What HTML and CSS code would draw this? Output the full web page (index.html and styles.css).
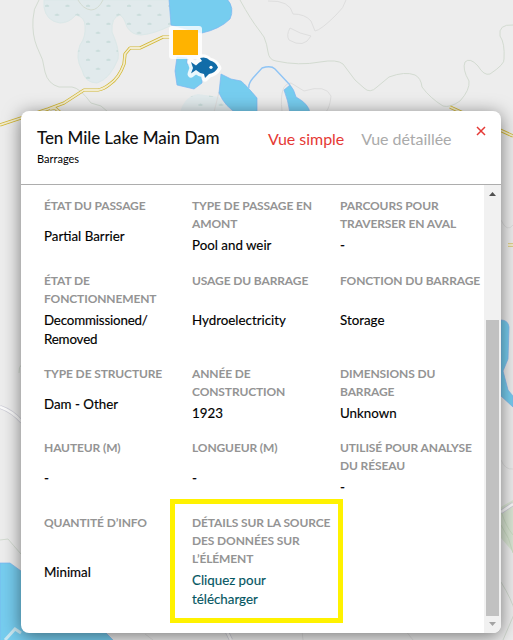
FILE: index.html
```html
<!DOCTYPE html>
<html lang="fr">
<head>
<meta charset="utf-8">
<title>Ten Mile Lake Main Dam</title>
<link rel="stylesheet" href="styles.css">
</head>
<body>
<svg class="map" viewBox="0 0 513 640" aria-hidden="true">
  <defs>
    <pattern id="marsh" width="20.5" height="18" patternUnits="userSpaceOnUse" x="3" y="2">
      <path d="M1 4h4M11 13h4" stroke="#b9d3cf" stroke-width="1.2"/><path d="M3 2.5v1.5M13 11.5v1.5" stroke="#c8dad8"/>
    </pattern>
  </defs>
  <rect width="513" height="640" fill="#ededed"/>
  <g id="wetlands">
    <path fill="#e1eaec" stroke="#dbe8e8" d="M44 0L44 7Q46 21 60 23Q69 23 76 15Q85 17 85 26Q86 37 80 45Q75 58 82 70Q85 83 97 83Q110 79 118 59Q120 50 112 32Q111 17 120 15Q124 17 127 27Q132 35 141 35Q154 34 172 25L169 0Z"/>
    <path fill="url(#marsh)" d="M44 0L44 7Q46 21 60 23Q69 23 76 15Q85 17 85 26Q86 37 80 45Q75 58 82 70Q85 83 97 83Q110 79 118 59Q120 50 112 32Q111 17 120 15Q124 17 127 27Q132 35 141 35Q154 34 172 25L169 0Z"/>
    <path fill="#e1eaec" d="M180 112Q185 96 198 94L219 97L232 112Z"/>
    <path fill="url(#marsh)" d="M180 112Q185 96 198 94L219 97L232 112Z"/>
  </g>
  <g fill="none" stroke="#d3dbd1">
    <path d="M39 0Q33 9 33 19Q32 35 37 47Q44 60 45 72Q48 84 59 87L72 87Q80 88 91 103L101 106L108 112"/>
    <path d="M78 0Q83 9 91 10Q98 10 103 0M240 0Q251 20 259 30L264 37Q267 44 268 52Q269 60 276 61Q299 66 320 62Q337 59 343 64L355 80L364 88Q370 94 377 87L389 77Q405 71 415 75Q421 78 422 87Q430 98 443 106Q450 108 460 101Q470 90 469 81Q462 69 465 62Q470 57 478 66Q484 76 490 74Q505 64 504 59Q505 43 500 36Q498 24 513 25"/>
    <path d="M0 540L8 539Q13 545 21 554M19 373Q18 367 23 363M501 582Q512 600 515 612L503 640"/>
  </g>
  <g fill="none" stroke="#dedede">
    <path d="M268 1Q290 0 293 14Q305 14 311 21L315 31Q321 30 336 15Q344 8 346 0M290 28Q286 35 289 40Q304 49 311 36Q300 34 290 28M282 111Q279 84 291 83L304 91Q326 84 331 96Q330 107 326 112M214 112L219 92L238 93L244 100L245 111M501 220Q507 233 513 225M501 460Q505 470 513 469M145 634L153 640M61 629L63 640M302 631L303 640M405 630L413 640"/>
  </g>
  <g fill="#76cdef" stroke="#7cb5f2" stroke-width=".7">
    <path d="M169 -1L171 25L202 33Q220 29 230 19Q235 8 227 -1Z"/>
    <path d="M177 57L175 71L177 85L194 89L202 83L202 65L187 64L187 58Z"/>
    <path d="M221 74L219 93Q225 107 238 114L257 114L257 98Q247 86 241 81L231 79Z"/>
    <path d="M290 85L284 90Q288 100 290 113L310 113Q309 104 296 97Q294 89 290 85Z"/>
    <path d="M501 320Q508 320 509 327L508 359L503 371L508 390L513 396V407L501 396Z"/>
    <path d="M0 563H10L21 571L106 633L114 641H0Z"/>
  </g>
  <path d="M249 88Q248 84 253 78L262 68Q271 65 275 69L290 85" fill="none" stroke="#8fc4f5" stroke-width="1.4"/>
  <path d="M5 640L15 629L21 633" fill="none" stroke="#c9e8f2" stroke-width="3"/>
  <path d="M501 507L513 500V552L501 538Z" fill="#dae6d4"/>
  <path d="M501 525Q510 538 513 553M501 511Q506 527 513 535" stroke="#cbdcc3" fill="none"/>
  <g fill="none" stroke-linejoin="round">
    <path stroke="#d1b52d" stroke-width="3.2" d="M170 37H163L140 48H130L125 54L124 64Q119 78 110 84Q104 89 98 90H84L64 103L48 109L21 118L0 125M50 109L55 108L63 115M450 107L513 136M508 245H513"/>
    <path stroke="#f2ecd0" stroke-width="1.8" d="M170 37H163L140 48H130L125 54L124 64Q119 78 110 84Q104 89 98 90H84L64 103L48 109L21 118L0 125M50 109L55 108L63 115M450 107L513 136M508 245H513"/>
    <path stroke="#cfcfd8" stroke-width="4" d="M0 407Q12 411 22 422M501 512L513 504M227 632L231 640"/>
    <path stroke="#fafafa" stroke-width="2.5" d="M0 407Q12 411 22 422M501 512L513 504M227 632L231 640"/>
  </g>
  <rect x="169" y="26" width="33" height="33" rx="3" fill="#fff" opacity=".8"/>
  <rect x="173" y="30" width="25" height="25" fill="#ffb300"/>
  <g id="fish">
    <path stroke="#fff" stroke-opacity=".85" stroke-width="7" stroke-linejoin="round" fill="#fff" d="M191 62L196 65Q199 61 202 61L200 58Q206 57 209 61Q215 62 218 68Q215 73 209 74L205 78L204 74Q199 73 196 70L191 74L193 68Z"/>
    <path fill="#116ca8" d="M191 62L196 65.5Q199 62 202 61L200 58Q206 56 210 60.5Q216 62 218 67.5Q215 73 209 74L205 78L204 74Q199 73 196 70L191 73.5L193 68Z"/>
    <circle cx="211" cy="67.3" r="1.6" fill="#fff"/>
  </g>
</svg>
<main class="card">
  <header class="head">
    <div class="names"><h1>Ten Mile Lake Main Dam</h1><p>Barrages</p></div>
    <nav><a class="tab active">Vue simple</a><a class="tab">Vue détaillée</a></nav>
    <svg class="close" viewBox="0 0 10 10"><path d="M1 1L9 9M9 1L1 9" stroke="#e53935" stroke-width="1.5"/></svg>
  </header>
  <div class="body">
    <dl class="grid">
      <div class="cell"><dt>ÉTAT DU PASSAGE</dt><dd>Partial Barrier</dd></div>
      <div class="cell"><dt>TYPE DE PASSAGE EN<br>AMONT</dt><dd>Pool and weir</dd></div>
      <div class="cell"><dt>PARCOURS POUR<br>TRAVERSER EN AVAL</dt><dd>-</dd></div>
      <div class="cell"><dt>ÉTAT DE<br>FONCTIONNEMENT</dt><dd>Decommissioned/<br>Removed</dd></div>
      <div class="cell"><dt>USAGE DU BARRAGE</dt><dd>Hydroelectricity</dd></div>
      <div class="cell"><dt>FONCTION DU BARRAGE</dt><dd>Storage</dd></div>
      <div class="cell"><dt>TYPE DE STRUCTURE</dt><dd>Dam - Other</dd></div>
      <div class="cell"><dt>ANNÉE DE<br>CONSTRUCTION</dt><dd>1923</dd></div>
      <div class="cell"><dt>DIMENSIONS DU<br>BARRAGE</dt><dd>Unknown</dd></div>
      <div class="cell"><dt>HAUTEUR (M)</dt><dd>-</dd></div>
      <div class="cell"><dt>LONGUEUR (M)</dt><dd>-</dd></div>
      <div class="cell"><dt>UTILISÉ POUR ANALYSE<br>DU RÉSEAU</dt><dd>-</dd></div>
      <div class="cell"><dt>QUANTITÉ D’INFO</dt><dd>Minimal</dd></div>
      <div class="cell marked"><dt>DÉTAILS SUR LA SOURCE<br>DES DONNÉES SUR<br>L’ÉLÉMENT</dt><dd><a class="link">Cliquez pour<br>télécharger</a></dd></div>
    </dl>
    <div class="scrollbar">
      <svg class="arrow" viewBox="0 0 17 17"><path d="M5 11L8.5 7L12 11Z" fill="#505050"/></svg>
      <div class="track"><div class="thumb"></div></div>
      <svg class="arrow" viewBox="0 0 17 17"><path d="M5 6L8.5 10L12 6Z" fill="#a3a3a3"/></svg>
    </div>
  </div>
</main>
</body>
</html>
```
FILE: styles.css
```css
*, *::after { box-sizing: border-box; }
body {
  margin: 0;
  height: 640px;
  overflow: hidden;
  padding: 111px 12px 7px 21px;
  font-family: Lato, "Liberation Sans", sans-serif;
  color: #000;
}
.map { position: absolute; inset: 0; width: 513px; height: 640px; z-index: -1; }
.card {
  display: flex;
  flex-direction: column;
  width: 480px;
  height: 522px;
  background: #fff;
  border-radius: 8px;
  overflow: hidden;
  box-shadow: 0 3px 18px rgba(0, 0, 0, .5);
}
.head {
  display: flex;
  align-items: flex-start;
  flex: 0 0 74px;
  padding: 15px 15px 0 16px;
  border-bottom: 1px solid #adadad;
}
.names { width: 231px; white-space: nowrap; }
h1 {
  margin: 0;
  font: 500 17px/24px Lato, sans-serif;
  letter-spacing: -.08px;
  color: #111;
}
p { margin: 0; font-size: 11px; line-height: 18px; }
nav { display: flex; gap: 17px; padding-top: 1px; }
.tab { font-size: 16px; line-height: 24px; letter-spacing: -.04px; color: #aaa; white-space: nowrap; }
.active { color: #e53935; }
.close { width: 10px; height: 10px; margin-left: auto; }
.body { display: flex; flex: 1; min-height: 0; }
.grid {
  display: grid;
  grid-template-columns: 148px 148px 144px;
  grid-template-rows: 75px 93px 74px 75px 96px;
  align-content: start;
  flex: 1;
  margin: 0;
  padding: 12px 0 0 23px;
}
.cell { position: relative; display: flex; flex-direction: column; padding-bottom: 16px; }
.cell:nth-last-child(-n+2) { padding-bottom: 0; }
dt {
  font-size: 12px;
  font-weight: 700;
  line-height: 18px;
  letter-spacing: -.12px;
  color: #949494;
  white-space: nowrap;
}
dd {
  display: flex;
  flex: 1;
  align-items: center;
  margin: 0;
  padding-top: 2px;
  font-size: 13.33px;
  line-height: 19px;
  -webkit-text-stroke: .15px currentColor;
}
.cell:nth-child(4) dd { letter-spacing: -.17px; }
.link { color: #045662; }
.marked::after {
  content: "";
  position: absolute;
  left: -22px;
  top: -15px;
  width: 173px;
  height: 124px;
  border: 5px solid #fff200;
}
.scrollbar { display: flex; flex-direction: column; width: 17px; background: #f1f1f1; }
.arrow { width: 17px; height: 17px; }
.track { display: flex; flex: 1; align-items: flex-end; justify-content: center; }
.thumb { width: 13px; height: 296px; background: #c1c1c1; }
```
